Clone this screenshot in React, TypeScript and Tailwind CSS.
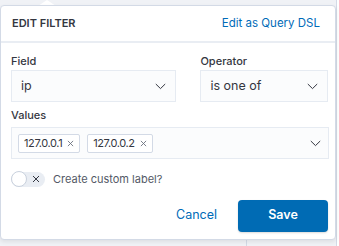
import React from "react";

function Chevron({ className = "" }: { className?: string }) {
  return (
    <svg width="11" height="7" viewBox="0 0 11 7" className={className} fill="none">
      <path d="M0.8 1 L5.5 5.6 L10.2 1" stroke="#343741" strokeWidth="1" />
    </svg>
  );
}

function Cross({ size = 8, color = "#343741" }: { size?: number; color?: string }) {
  return (
    <svg width={size} height={size} viewBox="0 0 8 8" fill="none">
      <path d="M1 1 L7 7 M7 1 L1 7" stroke={color} strokeWidth="1" />
    </svg>
  );
}

function Pill({ label }: { label: string }) {
  return (
    <div className="h-[19px] px-[5px] flex items-center gap-[5px] border border-[#d3dae6] rounded-[2px] bg-white text-[11px] text-[#343741] tracking-[-0.4px]">
      <span>{label}</span>
      <Cross size={7} color="#69707d" />
    </div>
  );
}

export default function App() {
  return (
    <div
      className="relative w-[339px] h-[246px] overflow-hidden bg-[#f0f2f6]"
      style={{ fontFamily: "Inter, 'Noto Sans', sans-serif" }}
    >
      {/* background elements behind popover */}
      <div className="absolute left-[336px] top-0 w-px h-[246px] bg-[#d3dae6]" />
      <div className="absolute left-[337px] top-0 w-[2px] h-[246px] bg-white" />
      <div className="absolute left-[246px] top-[238px] w-px h-[10px] bg-[#d3dae6]" />

      {/* arrow */}
      <div className="absolute left-[38px] top-0 w-0 h-0 border-l-[9px] border-r-[9px] border-b-[6px] border-l-transparent border-r-transparent border-b-white" />

      {/* popover card */}
      <div className="absolute left-0 top-[5px] w-[336px] h-[235px] bg-white rounded-[4px] border border-[#d3dae6] shadow-[0_2px_4px_rgba(0,0,0,0.08)] flex flex-col">
        <div className="h-[37px] shrink-0 flex items-center justify-between pl-[11px] pr-[15px] border-b-2 border-[#e9edf3]">
          <span className="text-[11px] font-semibold text-[#343741]">EDIT FILTER</span>
          <span className="text-[11.5px] text-[#006bb8]">Edit as Query DSL</span>
        </div>

        <div className="flex flex-col pl-[10px] pr-[7px] pt-[11px]">
          <div className="flex gap-[24px]">
            <div className="flex flex-col w-[166px]">
              <span className="text-[11px] font-medium text-[#343741] h-[14px] leading-[14px]">Field</span>
              <div className="mt-[2px] h-[32px] bg-[#fbfcfd] border border-[#e6ebf2] flex items-center justify-between pl-[9px] pr-[9px]">
                <span className="text-[12.5px] text-[#343741]">ip</span>
                <Chevron />
              </div>
            </div>
            <div className="flex flex-col w-[128px]">
              <span className="text-[11px] font-medium text-[#343741] h-[14px] leading-[14px]">Operator</span>
              <div className="mt-[2px] h-[32px] bg-[#fbfcfd] border border-[#e6ebf2] flex items-center justify-between pl-[9px] pr-[9px]">
                <span className="text-[12.5px] text-[#343741]">is one of</span>
                <Chevron />
              </div>
            </div>
          </div>

          <span className="mt-[6px] text-[11px] font-medium text-[#343741] h-[14px] leading-[14px]">Values</span>
          <div className="mt-[5px] w-[318px] h-[32px] bg-[#fbfcfd] border border-[#e6ebf2] flex items-center pl-[6px] pr-[7px]">
            <div className="flex gap-[7px] flex-1">
              <Pill label="127.0.0.1" />
              <Pill label="127.0.0.2" />
            </div>
            <Chevron />
          </div>

          <div className="mt-[12px] flex items-center gap-[8px]">
            <div className="relative w-[34px] h-[15px] rounded-full bg-[#e9edf3]">
              <div className="absolute left-0 -top-[0.5px] w-[16px] h-[16px] rounded-full bg-white border border-[#c9d1dd]" />
              <div className="absolute left-[21px] top-[3.5px]">
                <Cross size={8} color="#343741" />
              </div>
            </div>
            <span className="text-[11px] text-[#535966]">Create custom label?</span>
          </div>

          <div className="mt-[12px] flex items-center justify-end gap-[21px]">
            <span className="text-[12.5px] text-[#006bb8]">Cancel</span>
            <div className="w-[90px] h-[32px] rounded-[4px] bg-[#006bb4] flex items-center justify-center shadow-[0_1px_2px_rgba(0,0,0,0.15)]">
              <span className="text-[12.5px] font-semibold text-white">Save</span>
            </div>
          </div>
        </div>
      </div>
    </div>
  );
}
